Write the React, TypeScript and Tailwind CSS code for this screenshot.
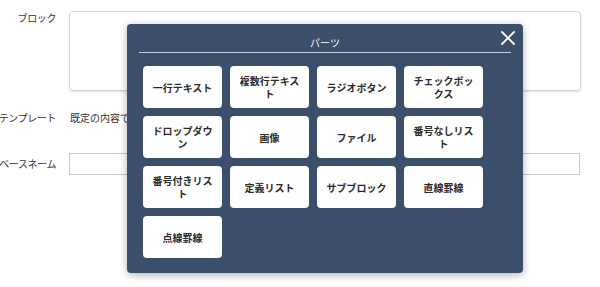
import { ReactNode } from 'react';

const parts = [
  '一行テキスト',
  '複数行テキスト',
  'ラジオボタン',
  'チェックボックス',
  'ドロップダウン',
  '画像',
  'ファイル',
  '番号なしリスト',
  '番号付きリスト',
  '定義リスト',
  'サブブロック',
  '直線罫線',
  '点線罫線',
];

function Row({ label, children, className }: { label: string; children: ReactNode; className?: string }) {
  return (
    <div className={'flex ' + (className ?? 'items-start')}>
      <div className="w-[56px] shrink-0 text-[10px] leading-[14px] text-[#333] whitespace-nowrap flex justify-end tracking-[-0.4px]">
        {label}
      </div>
      <div className="ml-[13px]">{children}</div>
    </div>
  );
}

export default function App() {
  return (
    <div
      className="relative w-[600px] h-[287px] bg-white overflow-hidden"
      style={{ fontFamily: '"Noto Sans CJK JP", "Noto Sans", sans-serif' }}
    >
      {/* Form behind the dialog */}
      <div className="pt-[11px]">
        <Row label="ブロック">
          <div className="w-[512px] h-[80px] border border-[#d4d4d4] rounded-[4px] shadow-[0_1px_2px_rgba(0,0,0,0.12)]" />
        </Row>
        <Row label="テンプレート" className="items-start mt-[20px]">
          <div className="text-[10px] leading-[14px] text-[#333] ml-[1px]">既定の内容で作成する</div>
        </Row>
        <Row label="データベースネーム" className="items-center mt-[28px]">
          <div className="w-[511px] h-[22px] border border-[#c8c8c8]" />
        </Row>
      </div>

      {/* Parts dialog */}
      <div className="absolute left-[127px] top-[24px] w-[396px] h-[249px] bg-[#3b4e6a] rounded-[4px] shadow-[0_2px_8px_rgba(0,0,0,0.3)] px-[12px]">
        <div className="pt-[11px] pb-[1px] border-b border-[#c9d2de] text-center text-[10px] leading-[16px] text-white">
          パーツ
        </div>
        <button className="absolute left-[374px] top-[7px] w-[14px] h-[14px]">
          <svg width="14" height="14" viewBox="0 0 14 14" fill="none" stroke="white" strokeWidth="1.8" strokeLinecap="round">
            <path d="M1 1L13 13M13 1L1 13" />
          </svg>
        </button>
        <div className="ml-[4px] mt-[13px] grid grid-cols-[repeat(4,79px)] auto-rows-[42px] gap-x-[8px] gap-y-[8px]">
          {parts.map(p => (
            <div
              key={p}
              className="bg-white rounded-[4px] flex items-center justify-center text-center px-[6px] text-[10px] leading-[13px] font-semibold text-[#2b2b2b]"
            >
              {p}
            </div>
          ))}
        </div>
      </div>
    </div>
  );
}
